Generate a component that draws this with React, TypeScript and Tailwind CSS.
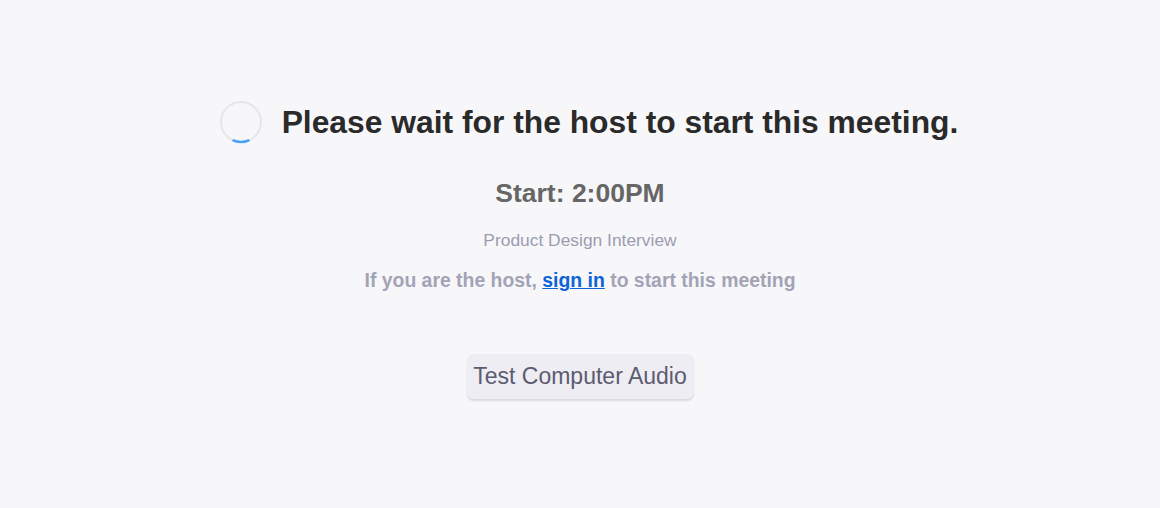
import React from "react";

export default function App() {
  return (
    <div
      className="w-[1160px] h-[508px] bg-[#f7f7fa] flex flex-col items-center"
      style={{ fontFamily: '"Liberation Sans", Arial, sans-serif' }}
    >
      <div className="flex items-center mt-[100px] gap-[19px] pl-[17px]">
        <svg width="44" height="44" viewBox="0 0 44 44">
          <circle cx="22" cy="22" r="20" fill="none" stroke="#e6e6ea" strokeWidth="2" />
          <path d="M 14.5 40.5 A 20 20 0 0 0 29.5 40.5" fill="none" stroke="#4aa3f5" strokeWidth="2.5" strokeLinecap="round" />
        </svg>
        <h1 className="text-[31.8px] font-bold text-[#2a2a2a] leading-none pt-[2px]">
          Please wait for the host to start this meeting.
        </h1>
      </div>
      <div className="mt-[36px] text-[26.5px] font-bold text-[#666666] leading-none">Start: 2:00PM</div>
      <div className="mt-[25px] text-[17.4px] text-[#9c9cb0] leading-none">Product Design Interview</div>
      <div className="mt-[22.5px] text-[19.4px] font-bold text-[#a3a3b6] leading-none">
        If you are the host,{" "}
        <a href="#" className="text-[#0e63d6] underline">sign in</a>{" "}
        to start this meeting
      </div>
      <button className="mt-[63px] w-[227px] h-[45px] rounded-[7px] bg-[#eeedf3] text-[23px] text-[#5c5b70] shadow-[0_2px_2px_rgba(0,0,0,0.12)] leading-none">
        Test Computer Audio
      </button>
    </div>
  );
}
